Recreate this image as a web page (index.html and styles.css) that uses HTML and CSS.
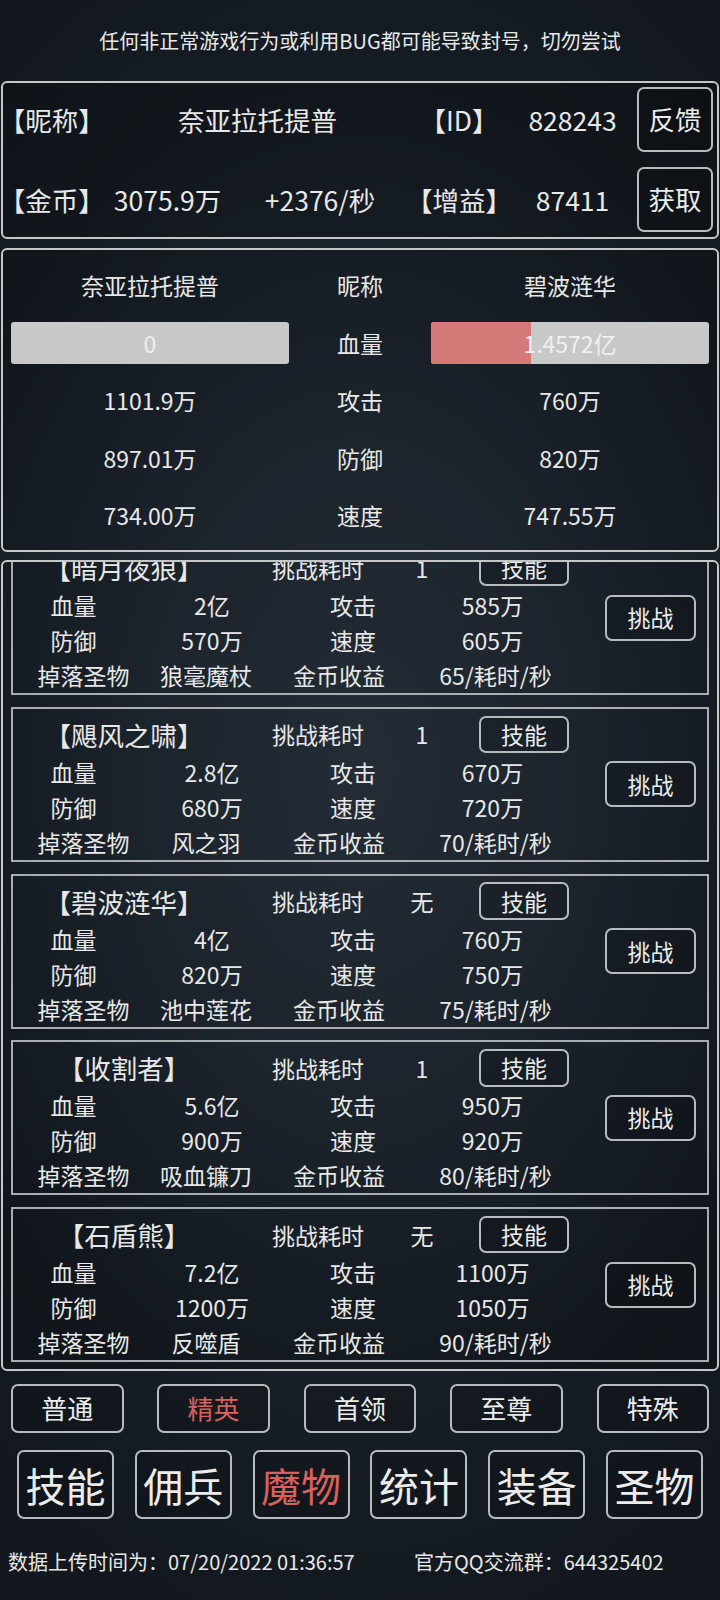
FILE: index.html
```html
<!DOCTYPE html>
<html><head>
<meta charset="utf-8">
<meta name="viewport" content="width=device-width, initial-scale=1.0">
<title>魔物</title>
<link rel="stylesheet" href="styles.css">
</head>
<body>
<div class="notice">任何非正常游戏行为或利用BUG都可能导致封号，切勿尝试</div>

<section class="panel player">
  <span class="lbl">【昵称】</span><span class="c nick">奈亚拉托提普</span><span class="lbl c">【ID】</span><span class="c">828243</span><button class="btn">反馈</button>
  <span class="lbl">【金币】</span><span class="c">3075.9万</span><span class="c">+2376/秒</span><span class="lbl c">【增益】</span><span class="c">87411</span><button class="btn">获取</button>
</section>

<section class="panel duel">
  <div>奈亚拉托提普</div><div>昵称</div><div>碧波涟华</div>
  <div class="bar"><i style="width:0%"></i><span>0</span></div><div>血量</div><div class="bar"><i style="width:36%"></i><span>1.4572亿</span></div>
  <div>1101.9万</div><div>攻击</div><div>760万</div>
  <div>897.01万</div><div>防御</div><div>820万</div>
  <div>734.00万</div><div>速度</div><div>747.55万</div>
</section>

<section class="panel list">
  <div class="scroll">
    <div class="card">
      <div class="head"><span class="title">【暗月夜狼】</span><span>挑战耗时</span><span>1</span><button class="btn skill">技能</button></div>
      <div class="stats"><span>血量</span><span>2亿</span><span>攻击</span><span>585万</span><button class="btn fight">挑战</button><span>防御</span><span>570万</span><span>速度</span><span>605万</span></div>
      <div class="drop"><span>掉落圣物</span><span>狼毫魔杖</span><span>金币收益</span><span>65/耗时/秒</span></div>
    </div>
    <div class="card">
      <div class="head"><span class="title">【飓风之啸】</span><span>挑战耗时</span><span>1</span><button class="btn skill">技能</button></div>
      <div class="stats"><span>血量</span><span>2.8亿</span><span>攻击</span><span>670万</span><button class="btn fight">挑战</button><span>防御</span><span>680万</span><span>速度</span><span>720万</span></div>
      <div class="drop"><span>掉落圣物</span><span>风之羽</span><span>金币收益</span><span>70/耗时/秒</span></div>
    </div>
    <div class="card">
      <div class="head"><span class="title">【碧波涟华】</span><span>挑战耗时</span><span>无</span><button class="btn skill">技能</button></div>
      <div class="stats"><span>血量</span><span>4亿</span><span>攻击</span><span>760万</span><button class="btn fight">挑战</button><span>防御</span><span>820万</span><span>速度</span><span>750万</span></div>
      <div class="drop"><span>掉落圣物</span><span>池中莲花</span><span>金币收益</span><span>75/耗时/秒</span></div>
    </div>
    <div class="card">
      <div class="head"><span class="title">【收割者】</span><span>挑战耗时</span><span>1</span><button class="btn skill">技能</button></div>
      <div class="stats"><span>血量</span><span>5.6亿</span><span>攻击</span><span>950万</span><button class="btn fight">挑战</button><span>防御</span><span>900万</span><span>速度</span><span>920万</span></div>
      <div class="drop"><span>掉落圣物</span><span>吸血镰刀</span><span>金币收益</span><span>80/耗时/秒</span></div>
    </div>
    <div class="card">
      <div class="head"><span class="title">【石盾熊】</span><span>挑战耗时</span><span>无</span><button class="btn skill">技能</button></div>
      <div class="stats"><span>血量</span><span>7.2亿</span><span>攻击</span><span>1100万</span><button class="btn fight">挑战</button><span>防御</span><span>1200万</span><span>速度</span><span>1050万</span></div>
      <div class="drop"><span>掉落圣物</span><span>反噬盾</span><span>金币收益</span><span>90/耗时/秒</span></div>
    </div>
  </div>
</section>

<nav class="tabs">
  <button class="btn">普通</button>
  <button class="btn on">精英</button>
  <button class="btn">首领</button>
  <button class="btn">至尊</button>
  <button class="btn">特殊</button>
</nav>

<nav class="menu">
  <button class="btn">技能</button>
  <button class="btn">佣兵</button>
  <button class="btn on">魔物</button>
  <button class="btn">统计</button>
  <button class="btn">装备</button>
  <button class="btn">圣物</button>
</nav>

<footer class="foot">
  <span>数据上传时间为：07/20/2022 01:36:57</span>
  <span>官方QQ交流群：644325402</span>
</footer>
</body>
</html>
```

FILE: styles.css
```css
body {
  margin: 0;
  width: 720px;
  height: 1600px;
  overflow: hidden;
  color: #e8e8e8;
  font-family: "Noto Sans CJK SC", "Noto Sans", sans-serif;
  background: radial-gradient(ellipse 80% 55% at 50% 48%, #2c3742 0%, #222b35 40%, #161d24 75%, #12181e 100%);
}

.notice {
  height: 81px;
  display: flex;
  align-items: center;
  justify-content: center;
  font-size: 20px;
}

.panel {
  box-sizing: border-box;
  margin: 0 1px;
  border: 2px solid #c4c6c8;
  border-radius: 6px;
  background: rgba(0, 0, 0, 0.18);
}

.btn {
  box-sizing: border-box;
  padding: 0;
  border: 2px solid #b8bbbd;
  border-radius: 7px;
  background: rgba(0, 0, 0, 0.12);
  color: #ececec;
  font-family: inherit;
  line-height: 1;
}
.btn.on { color: #d9605c; }

.lbl, .title { font-feature-settings: "halt"; }
.c { text-align: center; }

/* player info */
.player {
  height: 157.5px;
  padding: 4px 4px 4px 9px;
  display: grid;
  grid-template-columns: 93px 125px 180px 98px 129px 76px;
  grid-template-rows: 65px 65px;
  row-gap: 15px;
  align-items: center;
  font-size: 26.5px;
}
.player .nick { grid-column: span 2; }
.player .btn { height: 100%; font-size: 26.5px; }

/* duel */
.duel {
  margin-top: 9px;
  height: 304px;
  padding: 7px 8px 0;
  display: grid;
  grid-template-columns: 278px 142px 278px;
  grid-auto-rows: 57.5px;
  align-items: center;
  justify-items: center;
  font-size: 23px;
}
.bar {
  position: relative;
  width: 100%;
  height: 42px;
  border-radius: 3px;
  background: #c8c8c8;
  overflow: hidden;
  display: flex;
  align-items: center;
  justify-content: center;
}
.bar i {
  position: absolute;
  left: 0;
  top: 0;
  bottom: 0;
  background: #d47977;
}
.bar span { position: relative; color: #f0f0f0; }

/* monster list */
.list {
  margin-top: 8.5px;
  height: 810.5px;
  padding: 0 8px;
  overflow: hidden;
}
.scroll {
  margin-top: -22px;
  display: flex;
  flex-direction: column;
  gap: 11.8px;
}
.card {
  flex-shrink: 0;
  box-sizing: border-box;
  height: 155px;
  padding-top: 6px;
  border: 2px solid #a9adb1;
  font-size: 23px;
  text-align: center;
}
.head {
  height: 37.5px;
  display: grid;
  grid-template-columns: 222px 166px 42px 126px;
  align-items: center;
}
.title { font-size: 26.5px; }
.skill {
  margin-left: 36px;
  width: 90px;
  height: 37.5px;
  font-size: 23px;
}
.stats {
  margin-top: 2px;
  display: grid;
  grid-template-columns: 121px 156px 126px 153px 138px;
  grid-template-rows: 35px 35px;
  align-items: center;
}
.fight {
  grid-column: 5;
  grid-row: 1 / span 2;
  align-self: start;
  margin: 7px 0 0 36px;
  width: 91px;
  height: 46px;
  font-size: 23px;
}
.drop {
  height: 35px;
  display: grid;
  grid-template-columns: 141px 104px 162px 151px;
  align-items: center;
}

/* bottom navigation */
.tabs {
  margin-top: 13px;
  padding: 0 11px;
  display: flex;
  justify-content: space-between;
}
.tabs .btn { width: 112.5px; height: 49px; font-size: 26px; }

.menu {
  margin-top: 17.5px;
  padding: 0 17px;
  display: flex;
  justify-content: space-between;
}
.menu .btn { width: 97px; height: 69px; font-size: 40px; }

.foot {
  margin-top: 22px;
  height: 40px;
  padding-left: 8px;
  display: grid;
  grid-template-columns: 406px auto;
  align-items: center;
  font-size: 20px;
}
```
